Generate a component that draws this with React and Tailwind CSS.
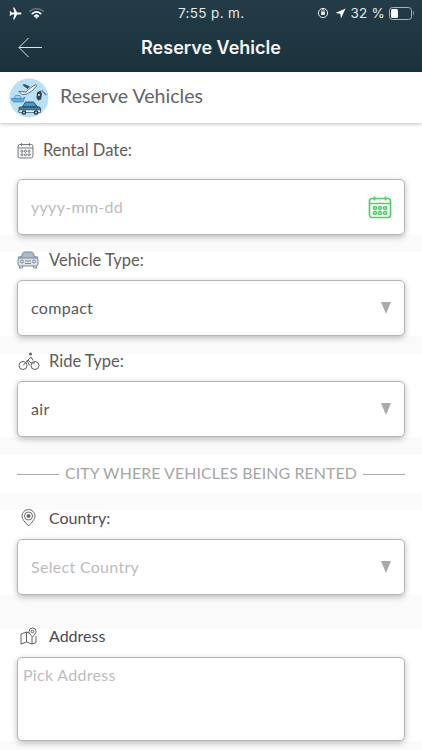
const LABEL = 'text-[16.5px] leading-5 text-[#5c5c5e] font-["Lato",sans-serif]'
const BOX = 'mx-[17px] flex items-center justify-between rounded-[5px] border border-[#b5b5b7] bg-white shadow-[0_2px_6px_rgba(0,0,0,0.26)]'

function PlaneIcon() {
  return (
    <svg width="13" height="13" viewBox="0 0 24 24" fill="#fff">
      <path d="M23 12c0-1-1-1.800-2.200-1.800H15L9.800 1H7.500l2.500 9.200H5L3.200 8H1l1.200 4L1 16h2.200L5 13.800h5L7.500 23h2.300L15 13.800h5.800C22 13.800 23 13 23 12z" />
    </svg>
  )
}

function WifiIcon() {
  return (
    <svg width="15" height="12" viewBox="0 0 17 13" fill="none" strokeLinecap="round">
      <path d="M1 4.500C5.500 0.500 11.500 0.500 16 4.500" stroke="#5d6f76" strokeWidth="2" />
      <path d="M3.800 7.200C6.600 4.900 10.400 4.900 13.200 7.200" stroke="#fff" strokeWidth="2" />
      <path d="M6.500 10C7.600 9 9.400 9 10.500 10" stroke="#fff" strokeWidth="2" />
      <circle cx="8.500" cy="11.500" r="1.300" fill="#fff" />
    </svg>
  )
}

function StatusBar() {
  return (
    <div className="flex h-[25px] items-center pl-[9px] pr-[8px] pt-[1px] text-[13.5px] text-[#e4e9eb] font-['Inter',sans-serif]">
      <div className="flex w-[150px] items-center gap-[7px]">
        <PlaneIcon />
        <WifiIcon />
      </div>
      <span className="ml-[19px] tracking-[0.35px]">7:55 p. m.</span>
      <div className="ml-auto flex items-center">
        <svg width="12" height="12" viewBox="0 0 13 13" fill="none" stroke="#fff">
          <circle cx="6.500" cy="6.500" r="5" strokeWidth="1" />
          <rect x="4.500" y="5" width="4" height="3.500" fill="#fff" stroke="none" />
          <path d="M5.200 5V4a1.300 1.300 0 0 1 2.600 0v1" strokeWidth="0.800" />
        </svg>
        <svg className="ml-[6px]" width="11" height="11" viewBox="0 0 12 12" fill="#fff">
          <path d="M11.500 0.500L0.500 5.500L5.800 6.200L6.500 11.500Z" />
        </svg>
        <span className="ml-[5px] tracking-[0.2px]">32 %</span>
        <div className="ml-[4px] flex h-[13px] w-[23px] items-center rounded-[3.5px] border border-[#a9b4b8] p-[1px]">
          <div className="h-full w-[7px] rounded-[1.5px] bg-white" />
        </div>
        <div className="ml-[1px] h-[4px] w-[1px] bg-[#76868c]" />
      </div>
    </div>
  )
}

function TopBar() {
  return (
    <header className="h-[72px] bg-gradient-to-b from-[#233c47] to-[#1b323c] text-white">
      <StatusBar />
      <div className="relative flex h-[47px] items-center justify-center pb-[3px]">
        <svg className="absolute left-[18px] top-[12px]" width="24" height="21" viewBox="0 0 24 21" fill="none" stroke="#dfe6e8" strokeWidth="1">
          <path d="M24 10.500H1M10.500 1L1 10.500L10.500 20" />
        </svg>
        <h1 className="text-[18px] font-semibold text-[#f4f6f7] font-['Inter',sans-serif]">Reserve Vehicle</h1>
      </div>
    </header>
  )
}

function VehiclesLogo() {
  return (
    <svg width="40" height="40" viewBox="0 0 40 40" className="shrink-0">
      <circle cx="20" cy="20" r="19.500" fill="#b9e0f3" />
      {/* plane */}
      <path d="M10 13.500l7 .5 5-4.500 4-2.500c1.200-.7 1.800.3 1 1.500l-3.500 4-5.500 3.500-5 .5z" fill="#f6fafc" stroke="#2b4f68" strokeWidth="0.800" />
      <path d="M15 6l6 2.500-2.500 2.500-5-4z" fill="#2b4f68" />
      {/* boat */}
      <path d="M2 20.500h11.500L16 19l-2 5H4.500z" fill="#62ade2" stroke="#2f78ad" strokeWidth="0.600" />
      <path d="M5 20.500l1.500-3h4.500l1.500 3z" fill="#9dd0ef" stroke="#2f78ad" strokeWidth="0.600" />
      {/* key */}
      <path d="M28 14.500l3.500-2 1.500 3.500-1 5.500-3 1-1.500-3z" fill="#33424d" />
      <circle cx="30" cy="17" r="1" fill="#e8f2f8" />
      <path d="M32.500 12.500l5 4.500" stroke="#5a7f96" strokeWidth="1.300" fill="none" />
      {/* car */}
      <path d="M13.500 29l2.500-4.500c.3-.5.8-.5 1.200-.5h6.600c.6 0 1 .2 1.300.5l3.400 4.500z" fill="#4e96c8" stroke="#1f3442" strokeWidth="0.800" />
      <path d="M11 29h19c.8 0 1.500.7 1.500 1.500V34h-21.500v-3.500c0-.8.500-1.500 1-1.500z" fill="#3d83b6" stroke="#1f3442" strokeWidth="0.800" />
      <path d="M10 32h21.500v2.500H10z" fill="#eef3f6" stroke="#1f3442" strokeWidth="0.500" />
      <circle cx="15" cy="34.500" r="2.300" fill="#1f2d37" />
      <circle cx="27" cy="34.500" r="2.300" fill="#1f2d37" />
      <circle cx="15" cy="34.500" r="0.900" fill="#dfe7ec" />
      <circle cx="27" cy="34.500" r="0.900" fill="#dfe7ec" />
    </svg>
  )
}

function CalendarIcon({ color, size, weight = 1.4 }) {
  return (
    <svg width={size} height={size} viewBox="0 0 24 24" fill="none" stroke={color} strokeWidth={weight}>
      <rect x="1.500" y="3.500" width="21" height="19" rx="2.500" />
      <path d="M1.500 8.500h21M6.500 1.500v4M17.500 1.500v4" />
      <circle cx="7" cy="13" r="1.500" />
      <circle cx="12" cy="13" r="1.500" />
      <circle cx="17" cy="13" r="1.500" />
      <circle cx="7" cy="18" r="1.500" />
      <circle cx="12" cy="18" r="1.500" />
      <circle cx="17" cy="18" r="1.500" />
    </svg>
  )
}

function CarIcon() {
  return (
    <svg width="22" height="18" viewBox="0 0 22 18" fill="none" stroke="#7d8a9a" strokeWidth="1">
      <path d="M4 7l1.500-4.500C5.800 1.700 6.500 1 7.500 1h7c1 0 1.700.7 2 1.500L18 7" fill="#aeb9c4" />
      <path d="M4 7H1.500V5.800H4M18 7h2.500V5.800H18" />
      <rect x="1" y="7" width="20" height="8" rx="2" fill="#dbe1e7" />
      <path d="M2.500 15v2h3v-2M16.500 15v2h3v-2" />
      <circle cx="5" cy="10.500" r="1.500" />
      <circle cx="17" cy="10.500" r="1.500" />
      <path d="M8 10h6M8 12.500h6" />
    </svg>
  )
}

function BikeIcon() {
  return (
    <svg width="22" height="19" viewBox="0 0 22 19" fill="none" stroke="#5f6165" strokeWidth="1">
      <circle cx="5" cy="13.500" r="4" />
      <circle cx="17" cy="13.500" r="4" />
      <circle cx="12.500" cy="2" r="1.500" fill="#5f6165" stroke="none" />
      <path d="M5 13.500l5-5.500 3 3h4M10 8l3-3 2 3.500M9 8l2.500 5.500" />
    </svg>
  )
}

function PinIcon() {
  return (
    <svg width="15" height="18" viewBox="0 0 15 18" fill="none" stroke="#66686c" strokeWidth="1">
      <path d="M7.500 17C4 13 1 10.500 1 7a6.500 6.500 0 0 1 13 0c0 3.500-3 6-6.500 10z" />
      <circle cx="7.500" cy="7" r="4" />
      <circle cx="7.500" cy="7" r="2" fill="#66686c" stroke="none" />
    </svg>
  )
}

function MapIcon() {
  return (
    <svg width="18" height="18" viewBox="0 0 18 18" fill="none" stroke="#5f6165" strokeWidth="1">
      <path d="M10 6.500L6.500 5 1 7v10l5.500-2 5.500 2 4-1.500V9" />
      <path d="M6.500 5v10M12 10v7" />
      <path d="M12.500 10C10.500 7.500 9 6.300 9 4.500a3.500 3.500 0 0 1 7 0c0 1.800-1.500 3-3.500 5.500z" fill="#fff" />
      <circle cx="12.500" cy="4.500" r="1.300" />
    </svg>
  )
}

function Caret() {
  return <div className="mr-[13px] mt-[-1px] h-0 w-0 border-x-[5.5px] border-t-[12px] border-x-transparent border-t-[#a9a9ae]" />
}

function SelectBox({ value, placeholder }) {
  return (
    <div className={`${BOX} h-[56px]`}>
      <span className={`pl-[13px] text-[16px] tracking-[0.3px] font-["Lato",sans-serif] ${placeholder ? 'text-[#bcbcbe]' : 'text-[#58585a]'}`}>
        {value}
      </span>
      <Caret />
    </div>
  )
}

function FieldLabel({ icon, text, textClass, className }) {
  return (
    <div className={`flex items-center ${className}`}>
      {icon}
      <span className={`${LABEL} ${textClass}`}>{text}</span>
    </div>
  )
}

export default function App() {
  return (
    <div className="h-[750px] w-[422px] overflow-hidden bg-[#fafafa]">
      <TopBar />

      <div className="relative z-10 flex h-[51px] items-center gap-[11px] bg-white pl-[9px] shadow-[0_1px_4px_rgba(0,0,0,0.25)]">
        <VehiclesLogo />
        <span className="mb-[3px] text-[19.6px] text-[#646466] font-['Lato',sans-serif]">Reserve Vehicles</span>
      </div>

      <section className="h-[112px] bg-white pt-[17px]">
        <FieldLabel
          className="h-[20px] pl-[17px]"
          icon={<CalendarIcon color="#70737c" size={17} />}
          text="Rental Date:"
          textClass="ml-[9px]"
        />
        <div className={`${BOX} mt-[19px] h-[56px]`}>
          <span className="pl-[13px] text-[16px] tracking-[0.3px] text-[#bcbcbe] font-['Lato',sans-serif]">yyyy-mm-dd</span>
          <div className="mr-[12px]">
            <CalendarIcon color="#4fd067" size={24} weight={1.7} />
          </div>
        </div>
      </section>

      <div className="h-[17px]" />

      <section className="h-[84px] bg-white">
        <FieldLabel className="h-[16px] pl-[17px]" icon={<CarIcon />} text="Vehicle Type:" textClass="ml-[10px]" />
        <div className="mt-[12px]">
          <SelectBox value="compact" />
        </div>
      </section>

      <div className="h-[17px]" />

      <section className="h-[84px] bg-white">
        <FieldLabel className="h-[16px] pl-[18px]" icon={<BikeIcon />} text="Ride Type:" textClass="ml-[9px]" />
        <div className="mt-[12px]">
          <SelectBox value="air" />
        </div>
      </section>

      <div className="h-[18px]" />

      <div className="flex h-[38px] items-center gap-[6px] bg-white px-[17px]">
        <div className="h-px flex-1 bg-[#a9a9a9]" />
        <span className="mb-[2px] text-[15.9px] tracking-[0.1px] text-[#a6a6a6] font-['Lato',sans-serif]">CITY WHERE VEHICLES BEING RENTED</span>
        <div className="h-px flex-1 bg-[#a9a9a9]" />
      </div>

      <div className="h-[17px]" />

      <section className="h-[85px] bg-white">
        <FieldLabel className="h-[16px] pl-[21px]" icon={<PinIcon />} text="Country:" textClass="ml-[13px] !text-[16px] !text-[#4d4d4f]" />
        <div className="mt-[13px]">
          <SelectBox value="Select Country" placeholder />
        </div>
      </section>

      <div className="h-[34px]" />

      <section className="h-[112px] bg-white">
        <FieldLabel className="h-[14px] pl-[20px]" icon={<MapIcon />} text="Address" textClass="ml-[11px] !text-[16px] !text-[#4a4a4c]" />
        <div className={`${BOX} mt-[14px] h-[84px] !items-start`}>
          <span className="pl-[5px] pt-[5px] text-[16px] tracking-[0.3px] text-[#bcbcbe] font-['Lato',sans-serif]">Pick Address</span>
        </div>
      </section>
    </div>
  )
}
